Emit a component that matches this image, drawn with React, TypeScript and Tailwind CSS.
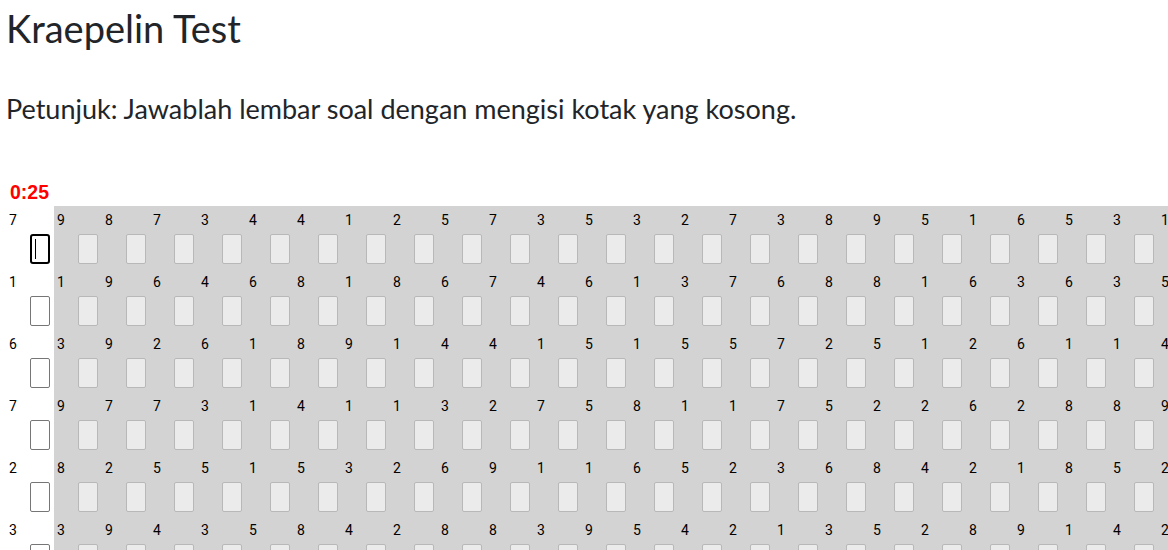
const rows: { head: number; digits: number[] }[] = [
  { head: 7, digits: [9, 8, 7, 3, 4, 4, 1, 2, 5, 7, 3, 5, 3, 2, 7, 3, 8, 9, 5, 1, 6, 5, 3, 1, 4] },
  { head: 1, digits: [1, 9, 6, 4, 6, 8, 1, 8, 6, 7, 4, 6, 1, 3, 7, 6, 8, 8, 1, 6, 3, 6, 3, 5, 2] },
  { head: 6, digits: [3, 9, 2, 6, 1, 8, 9, 1, 4, 4, 1, 5, 1, 5, 5, 7, 2, 5, 1, 2, 6, 1, 1, 4, 7] },
  { head: 7, digits: [9, 7, 7, 3, 1, 4, 1, 1, 3, 2, 7, 5, 8, 1, 1, 7, 5, 2, 2, 6, 2, 8, 8, 9, 3] },
  { head: 2, digits: [8, 2, 5, 5, 1, 5, 3, 2, 6, 9, 1, 1, 6, 5, 2, 3, 6, 8, 4, 2, 1, 8, 5, 2, 6] },
  { head: 3, digits: [3, 9, 4, 3, 5, 8, 4, 2, 8, 8, 3, 9, 5, 4, 2, 1, 3, 5, 2, 8, 9, 1, 4, 2, 5] },
];

function HeadCell({ digit, active }: { digit: number; active: boolean }) {
  return (
    <div className="w-[48px] shrink-0 bg-white pt-[4px] pb-[4px]">
      <div className="h-[20px] pl-[3px] text-[14px] leading-[20px] text-black">{digit}</div>
      <div className="mt-[4px] ml-[24px] h-[30px] w-[20px]">
        {active ? (
          <div className="flex h-full w-full items-center rounded-[3px] border-2 border-black bg-white pl-[3px]">
            <span className="h-[20px] w-px bg-black" />
          </div>
        ) : (
          <div className="h-full w-full rounded-[2px] border border-[#767676] bg-white" />
        )}
      </div>
    </div>
  );
}

function Cell({ digit }: { digit: number }) {
  return (
    <div className="w-[48px] shrink-0 bg-[#d3d3d3] pt-[4px] pb-[4px]">
      <div className="h-[20px] pl-[3px] text-[14px] leading-[20px] text-black">{digit}</div>
      <div className="mt-[4px] ml-[24px] h-[30px] w-[20px] rounded-[2px] border border-[#b8b8b8] bg-[#ebebeb]" />
    </div>
  );
}

export default function App() {
  return (
    <main className="h-[550px] overflow-hidden bg-white px-[6px] text-[#212529] font-['Lato','Noto_Sans',sans-serif]">
      <h1 className="pt-[5px] text-[38px] leading-[46px] font-normal">Kraepelin Test</h1>
      <p className="mt-[42px] text-[27px] leading-[32px]">
        Petunjuk: Jawablah lembar soal dengan mengisi kotak yang kosong.
      </p>

      <div className="mt-[56px] pl-[4px] font-['Liberation_Sans',Arial,sans-serif] text-[19.5px] leading-[22px] font-bold text-[#ff0000]">
        0:25
      </div>

      <div className="mt-[3px] flex flex-col font-['Roboto',sans-serif]">
        {rows.map((row, r) => (
          <div key={r} className="flex">
            <HeadCell digit={row.head} active={r === 0} />
            {row.digits.map((d, i) => (
              <Cell key={i} digit={d} />
            ))}
          </div>
        ))}
      </div>
    </main>
  );
}
